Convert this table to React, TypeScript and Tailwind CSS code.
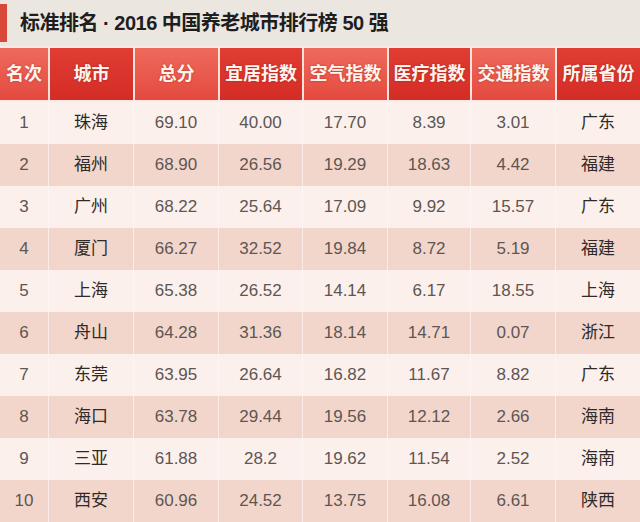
import React from 'react';

const headers = ['名次', '城市', '总分', '宜居指数', '空气指数', '医疗指数', '交通指数', '所属省份'];

const rows: string[][] = [
  ['1', '珠海', '69.10', '40.00', '17.70', '8.39', '3.01', '广东'],
  ['2', '福州', '68.90', '26.56', '19.29', '18.63', '4.42', '福建'],
  ['3', '广州', '68.22', '25.64', '17.09', '9.92', '15.57', '广东'],
  ['4', '厦门', '66.27', '32.52', '19.84', '8.72', '5.19', '福建'],
  ['5', '上海', '65.38', '26.52', '14.14', '6.17', '18.55', '上海'],
  ['6', '舟山', '64.28', '31.36', '18.14', '14.71', '0.07', '浙江'],
  ['7', '东莞', '63.95', '26.64', '16.82', '11.67', '8.82', '广东'],
  ['8', '海口', '63.78', '29.44', '19.56', '12.12', '2.66', '海南'],
  ['9', '三亚', '61.88', '28.2', '19.62', '11.54', '2.52', '海南'],
  ['10', '西安', '60.96', '24.52', '13.75', '16.08', '6.61', '陕西'],
];

const cols = 'grid grid-cols-[48px_85px_85px_84px_85px_83px_85px_85px]';
const font = { fontFamily: '"Liberation Sans", "Noto Sans CJK SC", sans-serif' };

export default function App() {
  return (
    <div className="w-[640px] h-[522px] overflow-hidden bg-[#f7ebe6]" style={font}>
      {/* title bar */}
      <div className="h-[46px] bg-[#ebe7e0] flex items-center">
        <div className="w-[7px] h-[38px] bg-[#d9473b]" />
        <h1 className="ml-[13px] text-[20px] font-bold text-[#1e1e1e] tracking-tight">
          标准排名 · 2016 中国养老城市排行榜 50 强
        </h1>
      </div>

      {/* header */}
      <div className={`${cols} h-[56px] border-y-2 border-[#fbe9e3] bg-[#fbe9e3]`}>
        {headers.map((h, i) => (
          <div
            key={h}
            className={`flex items-center justify-center border-l-2 border-[#fbe2da] first:border-l-0 text-[18px] font-semibold text-[#fff3ee] [text-shadow:0_0_2px_rgba(120,20,10,0.5)] ${
              i % 2 === 0
                ? 'bg-gradient-to-b from-[#ee6a5c] to-[#e4493e]'
                : 'bg-gradient-to-b from-[#e03d33] to-[#d42c26]'
            }`}
          >
            {h}
          </div>
        ))}
      </div>

      {/* body */}
      {rows.map((r, ri) => (
        <div
          key={r[0]}
          className={`${cols} h-[42px] ${ri % 2 === 0 ? 'bg-[#fcf0ec]' : 'bg-[#f3d6cb]'}`}
        >
          {r.map((c, ci) => (
            <div
              key={ci}
              className={`flex items-center justify-center border-l border-[#fff6f3]/70 first:border-l-0 text-[17px] ${
                ci === 1 || ci === 7 ? 'text-[#2e2a28]' : 'text-[#5d5654]'
              }`}
            >
              {c}
            </div>
          ))}
        </div>
      ))}
    </div>
  );
}
